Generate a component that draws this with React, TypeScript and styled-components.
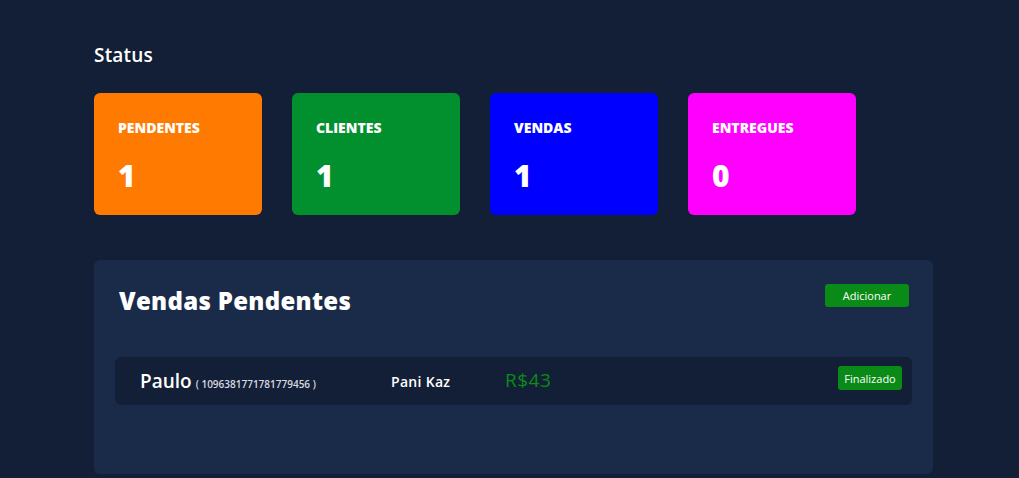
import React from "react";
import styled, { createGlobalStyle } from "styled-components";

const Global = createGlobalStyle`
  html, body { margin: 0; padding: 0; background: #131f36; }
  body { font-family: "Open Sans", "Noto Sans", sans-serif; color: #fff; }
  * { box-sizing: border-box; }
`;

const Page = styled.div`
  min-height: 478px;
  padding: 42px 86px 0 94px;
  background: #131f36;
`;

const SectionTitle = styled.h2`
  margin: 0;
  font-size: 19px;
  font-weight: 600;
  line-height: 26px;
  letter-spacing: 0.2px;
`;

const Cards = styled.div`
  display: flex;
  gap: 30px;
  margin-top: 25px;
`;

const Card = styled.div<{ $bg: string }>`
  width: 168px;
  height: 122px;
  border-radius: 6px;
  background: ${(p) => p.$bg};
  padding: 26px 24px 0 24px;
  display: flex;
  flex-direction: column;
`;

const CardLabel = styled.div`
  font-size: 14px;
  font-weight: 800;
  line-height: 18px;
`;

const CardValue = styled.div`
  margin-top: 21px;
  font-size: 30px;
  font-weight: 800;
  line-height: 36px;
`;

const Panel = styled.div`
  margin-top: 45px;
  width: 839px;
  height: 214px;
  background: #1a2b4a;
  border-radius: 6px;
  padding: 24px 21px 0 21px;
`;

const PanelHeader = styled.div`
  display: flex;
  justify-content: space-between;
  align-items: flex-start;
  padding: 0 3px 0 4px;
`;

const PanelTitle = styled.h1`
  margin: 0;
  font-size: 24px;
  font-weight: 800;
  line-height: 34px;
  letter-spacing: 0.3px;
`;

const GreenButton = styled.button<{ $w: number; $h: number; $lift?: number }>`
  width: ${(p) => p.$w}px;
  height: ${(p) => p.$h}px;
  margin-bottom: ${(p) => (p.$lift ?? 0) * 2}px;
  background: #0a8a17;
  color: #fff;
  border: none;
  border-radius: 3px;
  font-family: inherit;
  font-size: 11px;
  font-weight: 500;
  padding: 0;
  cursor: pointer;
`;

const Row = styled.div`
  margin-top: 39px;
  height: 48px;
  background: #131f36;
  border-radius: 6px;
  display: flex;
  align-items: center;
  padding: 0 10px 0 25px;
`;

const Client = styled.div`
  width: 251px;
  display: flex;
  align-items: baseline;
  gap: 4px;
`;

const Name = styled.span`
  font-size: 19px;
  font-weight: 600;
`;

const Id = styled.span`
  font-size: 10px;
  font-weight: 600;
  color: #d6d9e0;
`;

const Product = styled.div`
  width: 114px;
  font-size: 14px;
  font-weight: 600;
  letter-spacing: 0.3px;
`;

const Price = styled.div`
  flex: 1;
  font-size: 19px;
  font-weight: 500;
  color: #0a8a17;
  margin-top: -3px;
  letter-spacing: 0.5px;
`;

const cards = [
  { label: "PENDENTES", value: 1, bg: "#ff7a00" },
  { label: "CLIENTES", value: 1, bg: "#02902f" },
  { label: "VENDAS", value: 1, bg: "#0000ff" },
  { label: "ENTREGUES", value: 0, bg: "#ff00ff" },
];

export default function App() {
  return (
    <>
      <Global />
      <Page>
        <SectionTitle>Status</SectionTitle>
        <Cards>
          {cards.map((c) => (
            <Card key={c.label} $bg={c.bg}>
              <CardLabel>{c.label}</CardLabel>
              <CardValue>{c.value}</CardValue>
            </Card>
          ))}
        </Cards>
        <Panel>
          <PanelHeader>
            <PanelTitle>Vendas Pendentes</PanelTitle>
            <GreenButton $w={84} $h={23}>Adicionar</GreenButton>
          </PanelHeader>
          <Row>
            <Client>
              <Name>Paulo</Name>
              <Id>( 1096381771781779456 )</Id>
            </Client>
            <Product>Pani Kaz</Product>
            <Price>R$43</Price>
            <GreenButton $w={64} $h={24} $lift={3}>Finalizado</GreenButton>
          </Row>
        </Panel>
      </Page>
    </>
  );
}
